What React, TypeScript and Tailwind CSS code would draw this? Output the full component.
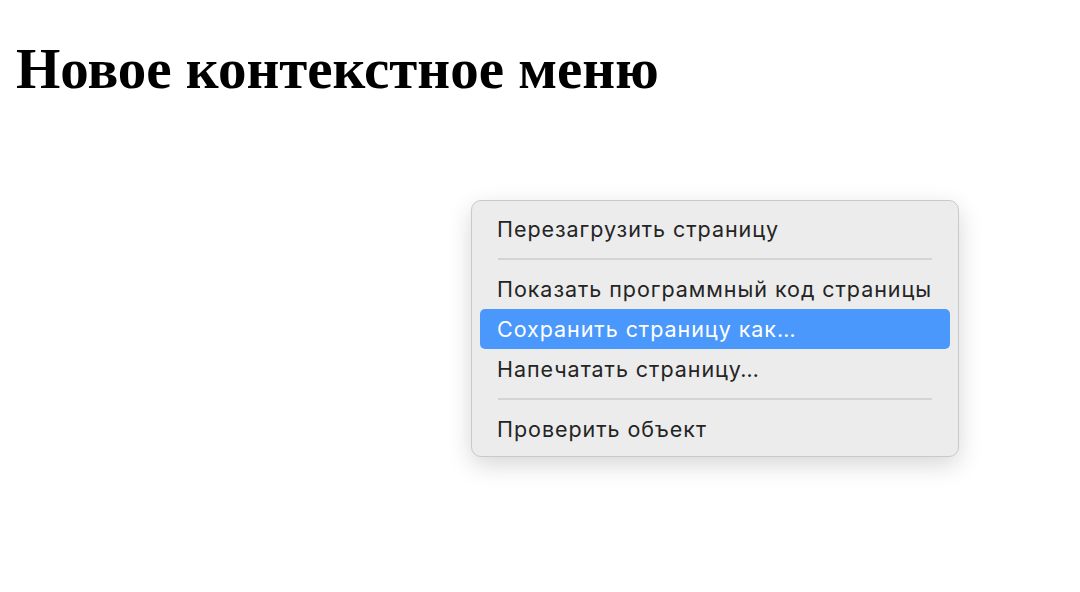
import { useState } from 'react';

const items: Array<{ label: string } | 'sep'> = [
  { label: 'Перезагрузить страницу' },
  'sep',
  { label: 'Показать программный код страницы' },
  { label: 'Сохранить страницу как…' },
  { label: 'Напечатать страницу…' },
  'sep',
  { label: 'Проверить объект' },
];

export default function App() {
  const [active, setActive] = useState(3);

  return (
    <div className="w-[1080px] h-[592px] bg-white overflow-hidden">
      <h1 className="font-['Liberation_Serif',serif] font-bold text-[57px] leading-[64px] text-black ml-4 pt-[37px] m-0">
        Новое контекстное меню
      </h1>

      <div className="ml-[471px] mt-[99px] w-[488px] rounded-[10px] border border-[#c9c9c9] bg-[#ececec] pt-[8px] pb-[7px] shadow-[0_8px_24px_rgba(0,0,0,0.16)] font-['Inter',sans-serif]">
        {items.map((item, index) =>
          item === 'sep' ? (
            <div key={index} className="h-5 flex items-center px-[26px]">
              <div className="h-[2px] w-full bg-[#d4d4d4]" />
            </div>
          ) : (
            <div key={index} className="px-2" onMouseEnter={() => setActive(index)}>
              <div
                className={`h-10 flex items-center px-[17px] rounded-[5px] text-[21.5px] tracking-[0.95px] whitespace-nowrap ${
                  active === index ? 'bg-[#4a98fb] text-white' : 'text-[#242424]'
                }`}
              >
                {item.label}
              </div>
            </div>
          )
        )}
      </div>
    </div>
  );
}
